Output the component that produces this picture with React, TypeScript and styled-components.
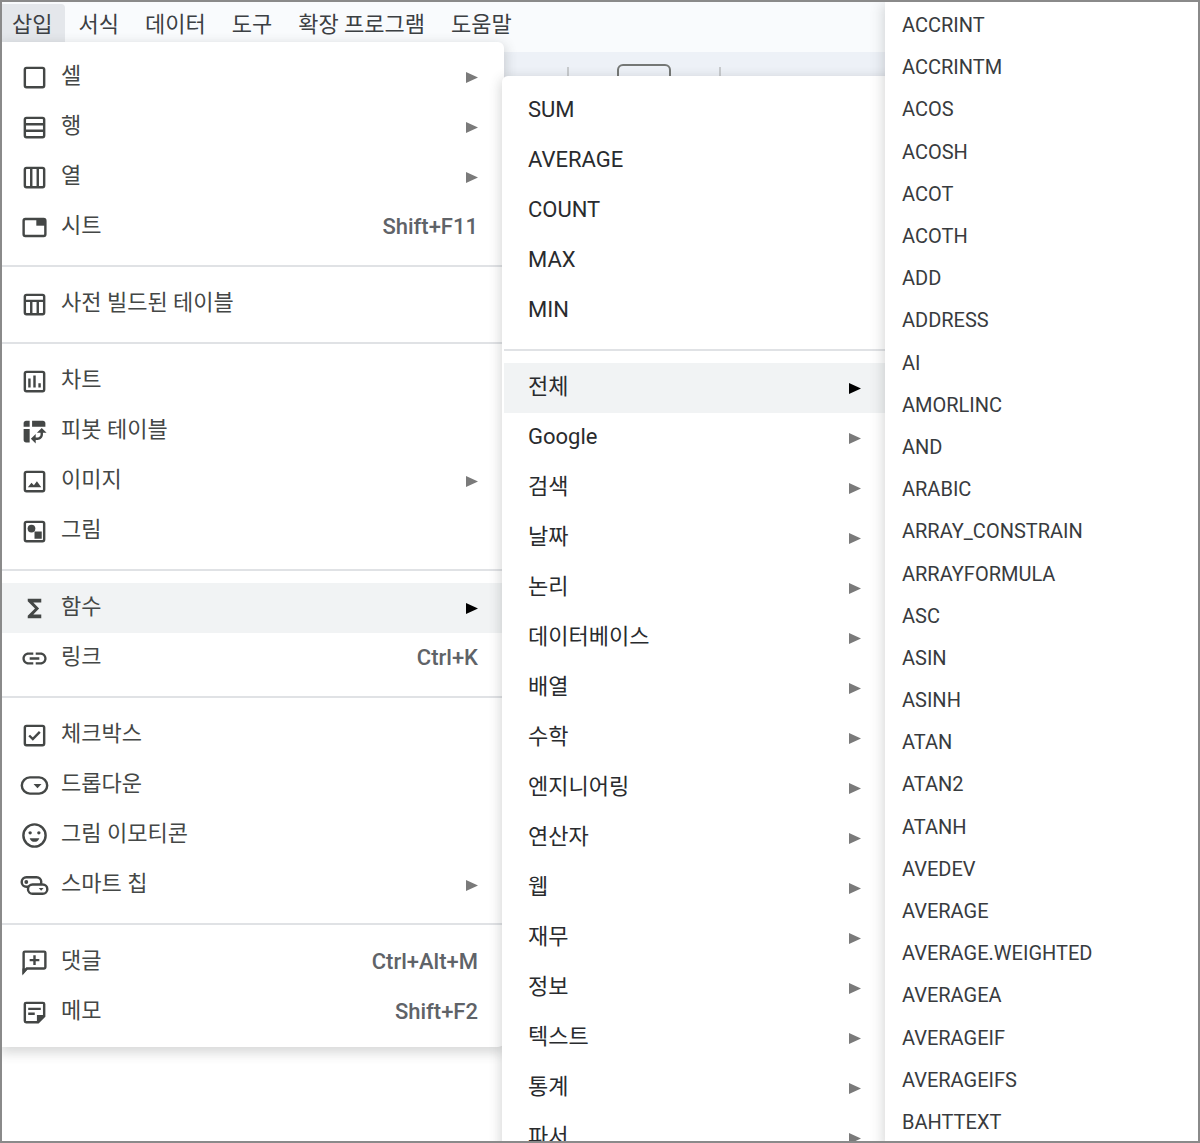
import React from "react";
import styled, { createGlobalStyle } from "styled-components";

const font = `Roboto, "Noto Sans CJK KR", "Noto Sans", sans-serif`;

const GlobalStyle = createGlobalStyle`
  * { box-sizing: border-box; }
  body { margin: 0; background: #fff; font-family: ${font}; }
  button { font: inherit; color: inherit; border: 0; margin: 0; background: none; cursor: pointer; }
`;

const Frame = styled.div`
  position: relative;
  height: 100vh;
  overflow: hidden;
  border: 2px solid #8a8a8a;
  background: #fff;
`;

const MenuBar = styled.nav`
  display: flex;
  align-items: flex-start;
  height: 50px;
  padding-top: 2px;
  background: #f9fbfd;
`;

const MenuBarButton = styled.button<{ $open?: boolean }>`
  && {
    height: 42px;
    padding: 0 13px;
    padding-left: ${(p) => (p.$open ? 10 : 13)}px;
    border-radius: 0 4px 0 0;
    background: ${(p) => (p.$open ? "#e4e7eb" : "transparent")};
    color: #3c4043;
    font-size: 22px;
    line-height: 42px;
    white-space: nowrap;
  }
`;

const Toolbar = styled.div`
  display: flex;
  align-items: flex-start;
  gap: 48px;
  height: 56px;
  padding: 12px 0 0 565px;
  background: #edf1f7;
`;

const ToolbarDivider = styled.span`
  width: 2px;
  height: 32px;
  margin-top: 3px;
  background: #c7cacd;
`;

const FontSizeInput = styled.input`
  width: 54px;
  height: 36px;
  border: 2px solid #747775;
  border-radius: 6px;
  background: transparent;
  font: 20px ${font};
  text-align: center;
`;

const Menu = styled.ul`
  position: absolute;
  margin: 0;
  padding: 10px 0;
  list-style: none;
  background: #fff;
  box-shadow: 0 4px 12px 2px rgba(60, 64, 67, 0.2);
`;

const InsertMenu = styled(Menu)`
  top: 40px;
  left: 0;
  width: 502px;
  border-radius: 0 6px 6px 0;
  color: #444746;
`;

const FunctionMenu = styled(Menu)`
  top: 74px;
  left: 500px;
  width: 400px;
  padding-left: 2px;
  border-radius: 6px;
  color: #292b2e;
`;

const NameMenu = styled(Menu)`
  top: 0;
  right: 0;
  bottom: -2px;
  left: 883px;
  display: flex;
  flex-direction: column;
  padding: 2px 0 0;
  color: #383b3e;
`;

const Row = styled.button<{ $active?: boolean; $end: number; $start: number }>`
  && {
    display: flex;
    align-items: center;
    width: 100%;
    height: 50px;
    padding: 0 ${(p) => p.$end}px 0 ${(p) => p.$start}px;
    background: ${(p) => (p.$active ? "#f1f3f4" : "transparent")};
    font-size: 22px;
    line-height: 32px;
    text-align: left;
  }
`;

const Label = styled.span`
  flex: 1;
  padding-bottom: 2px;
  white-space: nowrap;
`;

const Shortcut = styled.kbd`
  color: #5f6368;
  font-family: ${font};
  font-weight: 500;
`;

const Separator = styled.li`
  height: 2px;
  margin: 13px 0 12px;
  background: #e0e2e5;
`;

const NameItem = styled.li`
  flex: 1 0 42px;
  display: flex;
`;

const NameButton = styled.button`
  && {
    flex: 1;
    padding: 0 17px;
    font-size: 20px;
    line-height: 24px;
    text-align: left;
  }
`;

const Icon = styled.svg`
  width: 29px;
  height: 29px;
  margin-right: 12px;
  flex: none;
  fill: currentColor;
`;

const ArrowIcon = styled.svg<{ $active?: boolean }>`
  width: 12px;
  height: 11px;
  flex: none;
  fill: ${(p) => (p.$active ? "#000" : "#7a7a7a")};
`;

const Arrow = ({ active }: { active?: boolean }) => (
  <ArrowIcon $active={active} viewBox="0 0 12 11" aria-hidden="true">
    <path d="M0 0L12 5.5L0 11z" />
  </ArrowIcon>
);

const line = { fill: "none", stroke: "currentColor", strokeWidth: 2 };
const Box = () => <rect x="4" y="4" width="16" height="16" rx="1.4" {...line} />;

const icons: Record<string, React.ReactNode> = {
  cell: <Box />,
  row: (
    <>
      <Box />
      <path d="M4 9.3h16M4 14.7h16" {...line} />
    </>
  ),
  column: (
    <>
      <Box />
      <path d="M9.3 4v16M14.7 4v16" {...line} />
    </>
  ),
  sheet: (
    <>
      <rect x="3" y="5" width="18" height="14" rx="1.4" {...line} />
      <path d="M13.500 5H21v5.500h-7.500z" />
    </>
  ),
  table: (
    <>
      <Box />
      <path d="M4 9h16M9.3 9v11M14.7 9v11" {...line} />
    </>
  ),
  chart: (
    <>
      <Box />
      <path d="M6.8 9.5h2V17h-2zM11 7h2v10h-2zM15.2 13.5h2V17h-2z" />
    </>
  ),
  pivot: (
    <path d="M10 8h11V5c0-1.1-.9-2-2-2h-9v5zM3 8h5V3H5c-1.1 0-2 .9-2 2v3zm2 13h3V10H3v9c0 1.1.9 2 2 2zm8 1-4-4 4-4zm1-9 4-4 4 4zm.58 6H13v-2h1.58c1.33 0 2.42-1.08 2.42-2.42V13h2v1.58c0 2.44-1.98 4.42-4.42 4.42z" />
  ),
  image: (
    <>
      <Box />
      <path d="M6.5 16.8l3-3.8 2 2.2 2.5-3.4 3.6 5z" />
    </>
  ),
  drawing: (
    <>
      <Box />
      <circle cx="9.5" cy="9.6" r="3.2" />
      <path d="M12 12h6v6h-6z" />
    </>
  ),
  sigma: <path d="M17.6 4H6.4v2l6 6-6 6v2h11.2v-3H11l4.8-5L11 7h6.6z" />,
  link: (
    <path d="M3.9 12c0-1.71 1.39-3.1 3.1-3.1h4V7H7c-2.76 0-5 2.24-5 5s2.24 5 5 5h4v-1.9H7c-1.71 0-3.1-1.39-3.1-3.1zM8 13h8v-2H8v2zm9-6h-4v1.9h4c1.71 0 3.1 1.39 3.1 3.1s-1.39 3.1-3.1 3.1h-4V17h4c2.76 0 5-2.24 5-5s-2.24-5-5-5z" />
  ),
  checkbox: (
    <>
      <Box />
      <path d="M7.6 12l3 3 5.8-6" {...line} />
    </>
  ),
  dropdown: (
    <>
      <rect x="1.5" y="5.3" width="21" height="13.4" rx="6.7" {...line} />
      <path d="M11.2 10.7h6.6l-3.3 3.6z" />
    </>
  ),
  emoji: (
    <>
      <circle cx="12" cy="12" r="9.2" {...line} />
      <circle cx="8.4" cy="9.8" r="1.4" />
      <circle cx="15.6" cy="9.8" r="1.4" />
      <path d="M8 14.200h8c-.6 1.900-2.100 3-4 3s-3.400-1.100-4-3z" />
    </>
  ),
  chip: (
    <>
      <rect x="1.4" y="5.2" width="16.2" height="7.8" rx="3.9" {...line} />
      <circle cx="5.2" cy="9.1" r="1.6" />
      <rect x="6.6" y="11.2" width="16" height="7.6" rx="3.8" {...line} fill="#fff" />
      <path d="M15.500 14h4l-2 2.300z" />
    </>
  ),
  comment: (
    <>
      <path d="M3 20V4q0-1 1-1h16q1 0 1 1v12q0 1-1 1H5.600z" {...line} />
      <path d="M2 22v-5h5z" />
      <path d="M12 6v8M8 10h8" {...line} />
    </>
  ),
  memo: (
    <>
      <path d="M15 20H5q-1 0-1-1V5q0-1 1-1h14q1 0 1 1v10z" {...line} />
      <path d="M14 20.800V14h6.800zM6.800 8h10.400v2H6.800zM6.800 12h5.400v2H6.800z" />
    </>
  ),
};

type Item = { label: string; icon?: string; arrow?: boolean; keys?: string; active?: boolean } | null;

const insertItems: Item[] = [
  { icon: "cell", label: "셀", arrow: true },
  { icon: "row", label: "행", arrow: true },
  { icon: "column", label: "열", arrow: true },
  { icon: "sheet", label: "시트", keys: "Shift+F11" },
  null,
  { icon: "table", label: "사전 빌드된 테이블" },
  null,
  { icon: "chart", label: "차트" },
  { icon: "pivot", label: "피봇 테이블" },
  { icon: "image", label: "이미지", arrow: true },
  { icon: "drawing", label: "그림" },
  null,
  { icon: "sigma", label: "함수", arrow: true, active: true },
  { icon: "link", label: "링크", keys: "Ctrl+K" },
  null,
  { icon: "checkbox", label: "체크박스" },
  { icon: "dropdown", label: "드롭다운" },
  { icon: "emoji", label: "그림 이모티콘" },
  { icon: "chip", label: "스마트 칩", arrow: true },
  null,
  { icon: "comment", label: "댓글", keys: "Ctrl+Alt+M" },
  { icon: "memo", label: "메모", keys: "Shift+F2" },
];

const functionItems: Item[] = [
  ...["SUM", "AVERAGE", "COUNT", "MAX", "MIN"].map((label) => ({ label })),
  null,
  { label: "전체", arrow: true, active: true },
  ...[
    "Google", "검색", "날짜", "논리", "데이터베이스", "배열", "수학", "엔지니어링",
    "연산자", "웹", "재무", "정보", "텍스트", "통계", "파서",
  ].map((label) => ({ label, arrow: true })),
];

const functionNames = [
  "ACCRINT", "ACCRINTM", "ACOS", "ACOSH", "ACOT", "ACOTH", "ADD", "ADDRESS", "AI",
  "AMORLINC", "AND", "ARABIC", "ARRAY_CONSTRAIN", "ARRAYFORMULA", "ASC", "ASIN",
  "ASINH", "ATAN", "ATAN2", "ATANH", "AVEDEV", "AVERAGE", "AVERAGE.WEIGHTED",
  "AVERAGEA", "AVERAGEIF", "AVERAGEIFS", "BAHTTEXT",
];

const Items = ({ items, start, end }: { items: Item[]; start: number; end: number }) => (
  <>
    {items.map((item, i) =>
      item === null ? (
        <Separator key={i} role="separator" />
      ) : (
        <li key={i} role="none">
          <Row role="menuitem" $active={item.active} $start={start} $end={end}>
            {item.icon && (
              <Icon viewBox="0 0 24 24" aria-hidden="true">
                {icons[item.icon]}
              </Icon>
            )}
            <Label>{item.label}</Label>
            {item.keys && <Shortcut>{item.keys}</Shortcut>}
            {item.arrow && <Arrow active={item.active} />}
          </Row>
        </li>
      )
    )}
  </>
);

export default function App() {
  return (
    <Frame>
      <GlobalStyle />
      <MenuBar>
        {["삽입", "서식", "데이터", "도구", "확장 프로그램", "도움말"].map((label, i) => (
          <MenuBarButton key={label} $open={i === 0}>
            {label}
          </MenuBarButton>
        ))}
      </MenuBar>
      <Toolbar>
        <ToolbarDivider />
        <FontSizeInput aria-label="글꼴 크기" />
        <ToolbarDivider />
      </Toolbar>
      <InsertMenu role="menu">
        <Items items={insertItems} start={18} end={26} />
      </InsertMenu>
      <FunctionMenu role="menu">
        <Items items={functionItems} start={24} end={41} />
      </FunctionMenu>
      <NameMenu role="menu">
        {functionNames.map((name) => (
          <NameItem key={name} role="none">
            <NameButton role="menuitem">{name}</NameButton>
          </NameItem>
        ))}
      </NameMenu>
    </Frame>
  );
}
